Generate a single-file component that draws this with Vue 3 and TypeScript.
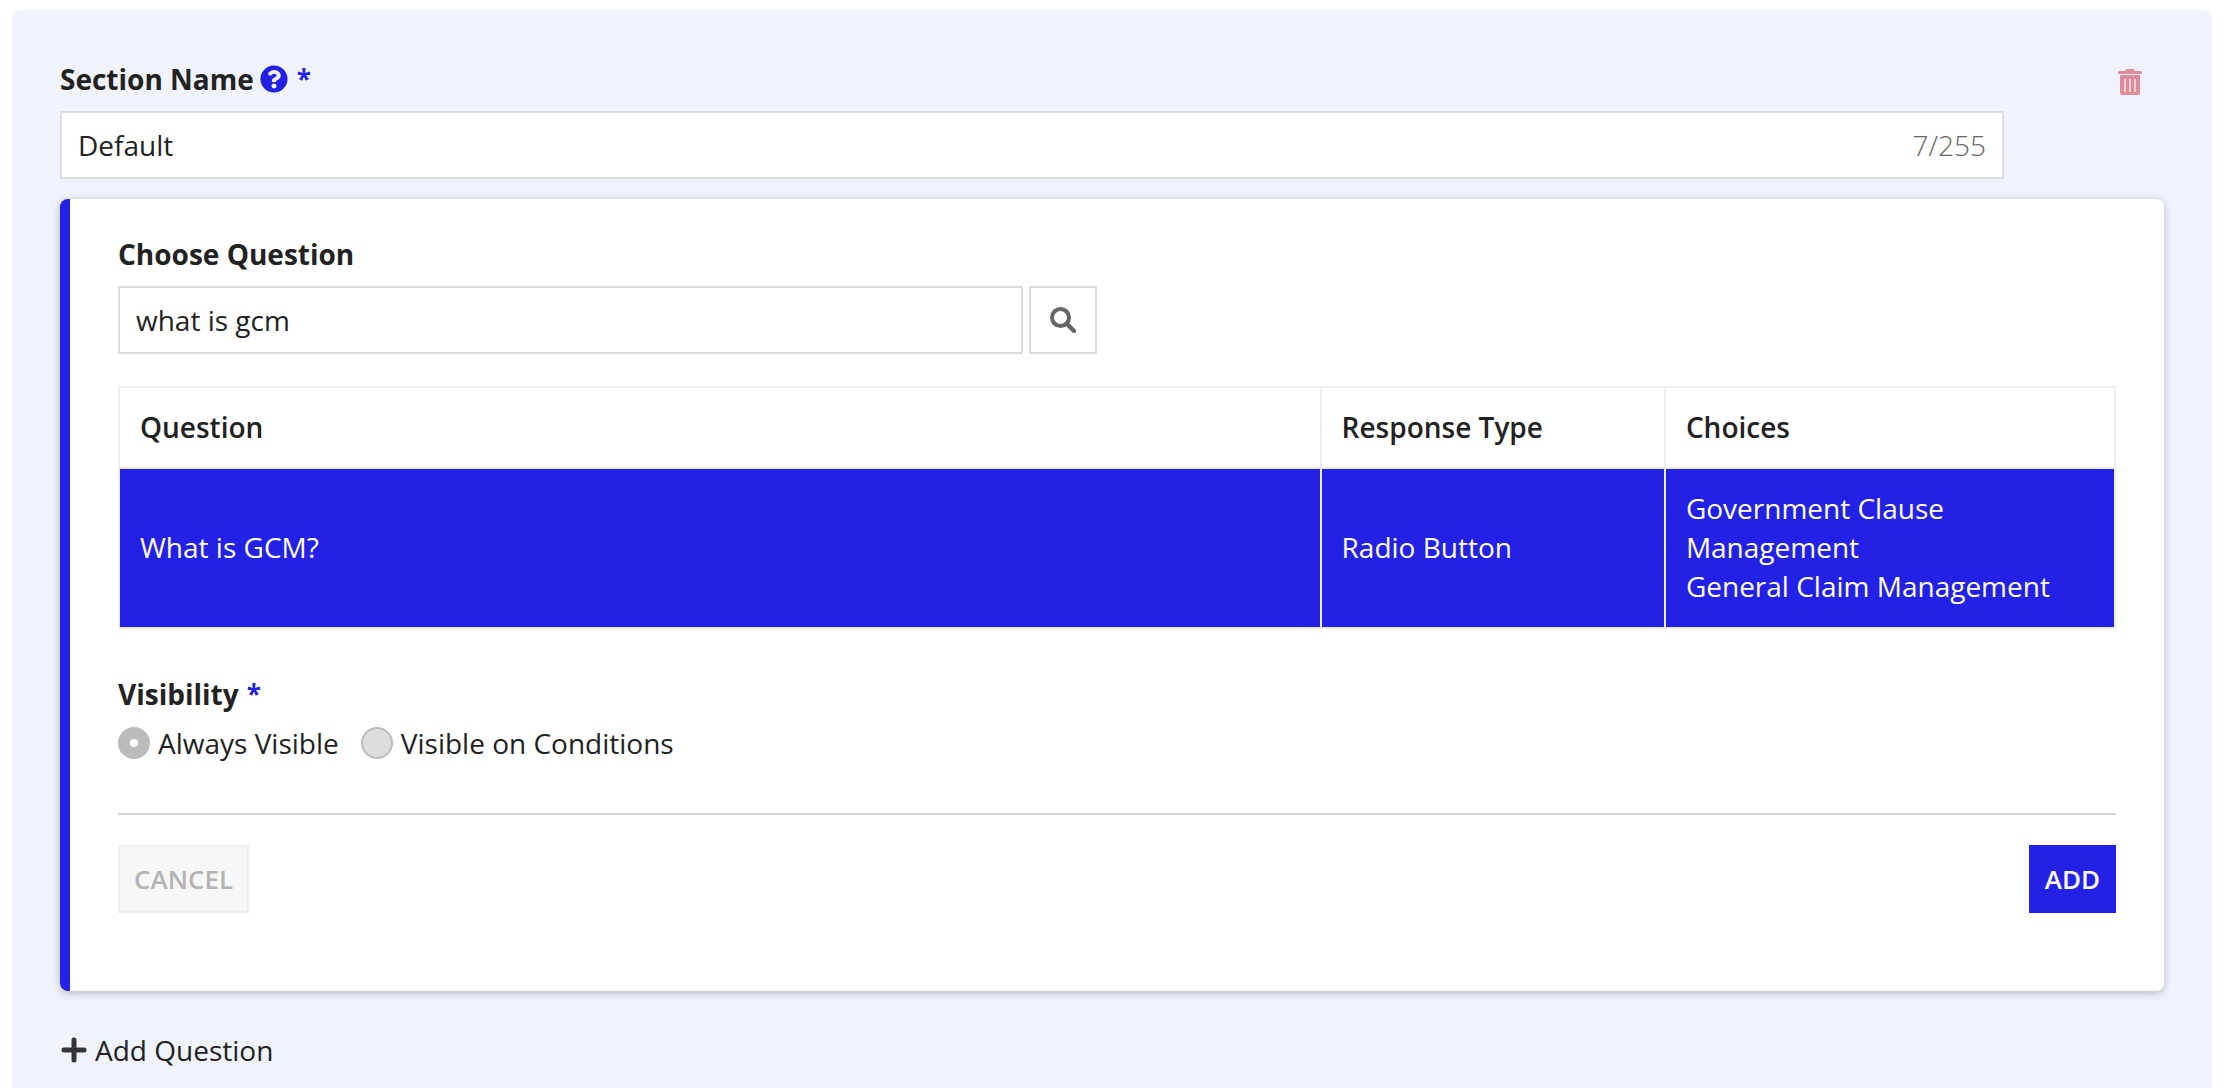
<script setup lang="ts">
import { ref, computed } from 'vue'

interface QuestionRow {
  question: string
  responseType: string
  choices: string[]
}

const maxLength = 255
const sectionName = ref('Default')
const search = ref('what is gcm')
const visibility = ref('always')
const counter = computed(() => `${sectionName.value.length}/${maxLength}`)

const rows: QuestionRow[] = [
  {
    question: 'What is GCM?',
    responseType: 'Radio Button',
    choices: ['Government Clause Management', 'General Claim Management'],
  },
]
</script>

<template>
  <main class="section-panel">
    <div class="section-head">
      <div class="section-field">
        <div class="label-row">
          <label class="label" for="section-name">Section Name</label>
          <svg class="help-icon" viewBox="0 0 512 512" aria-hidden="true">
            <path
              fill="currentColor"
              d="M504 256c0 136.997-111.043 248-248 248S8 392.997 8 256C8 119.083 119.043 8 256 8s248 111.083 248 248zM262.655 90c-54.497 0-89.255 22.957-116.549 63.758-3.536 5.286-2.353 12.415 2.715 16.258l34.699 26.31c5.205 3.947 12.621 3.008 16.665-2.122 17.864-22.658 30.113-35.797 57.303-35.797 20.429 0 45.698 13.148 45.698 32.958 0 14.976-12.363 22.667-32.534 33.976C247.128 238.528 216 254.941 216 296v4c0 6.627 5.373 12 12 12h56c6.627 0 12-5.373 12-12v-1.333c0-28.462 83.186-29.647 83.186-106.667 0-58.002-60.165-102-116.531-102zM256 338c-25.365 0-46 20.635-46 46 0 25.364 20.635 46 46 46s46-20.636 46-46c0-25.365-20.635-46-46-46z"
            />
          </svg>
          <span class="required">*</span>
        </div>
        <div class="text-box">
          <input id="section-name" v-model="sectionName" type="text" :maxlength="maxLength" />
          <span class="counter">{{ counter }}</span>
        </div>
      </div>
      <div class="section-actions">
        <button class="icon-button" type="button" aria-label="Delete section">
          <svg class="trash-icon" viewBox="0 0 24 26" aria-hidden="true">
            <path
              fill="currentColor"
              d="M1 2H7Q8 0 9 0H15Q16 0 17 2H23Q24 2 24 3V4Q24 5 23 5H1Q0 5 0 4V3Q0 2 1 2ZM2 6H22V24Q22 26 20 26H4Q2 26 2 24Z"
            />
            <path fill="none" stroke="#f0d3dd" stroke-width="2" d="M7 10V23M12 10V23M17 10V23" />
          </svg>
        </button>
      </div>
    </div>

    <section class="card">
      <div class="label-row">
        <label class="label" for="question-search">Choose Question</label>
      </div>
      <div class="search-row">
        <div class="text-box">
          <input id="question-search" v-model="search" type="text" />
        </div>
        <button class="search-button" type="button" aria-label="Search">
          <svg class="search-icon" viewBox="0 0 26 26" aria-hidden="true">
            <circle cx="10.5" cy="10.5" r="8.5" fill="none" stroke="currentColor" stroke-width="4" />
            <path d="M17 17L24 24" fill="none" stroke="currentColor" stroke-width="4.4" stroke-linecap="round" />
          </svg>
        </button>
      </div>

      <table class="questions">
        <colgroup>
          <col class="col-question" />
          <col class="col-type" />
          <col />
        </colgroup>
        <thead>
          <tr>
            <th scope="col">Question</th>
            <th scope="col">Response Type</th>
            <th scope="col">Choices</th>
          </tr>
        </thead>
        <tbody>
          <tr v-for="row in rows" :key="row.question">
            <td>{{ row.question }}</td>
            <td>{{ row.responseType }}</td>
            <td>
              <div v-for="choice in row.choices" :key="choice">{{ choice }}</div>
            </td>
          </tr>
        </tbody>
      </table>

      <fieldset class="visibility">
        <legend class="label-row">
          <span class="label">Visibility</span>
          <span class="required">*</span>
        </legend>
        <div class="radio-row">
          <label class="radio">
            <input v-model="visibility" type="radio" name="visibility" value="always" disabled />
            Always Visible
          </label>
          <label class="radio">
            <input v-model="visibility" type="radio" name="visibility" value="conditions" disabled />
            Visible on Conditions
          </label>
        </div>
      </fieldset>

      <footer class="card-actions">
        <button class="button cancel" type="button" disabled>CANCEL</button>
        <button class="button add" type="button">ADD</button>
      </footer>
    </section>

    <button class="add-question" type="button">
      <svg class="plus-icon" viewBox="0 0 26 26" aria-hidden="true">
        <path d="M13 3V23M3 13H23" fill="none" stroke="currentColor" stroke-width="5" stroke-linecap="round" />
      </svg>
      Add Question
    </button>
  </main>
</template>

<style>
body {
  margin: 0;
  background: #fff;
}
</style>

<style scoped>
.section-panel,
.section-panel * {
  box-sizing: border-box;
}

.section-panel {
  margin: 10px 14px 0 12px;
  padding: 49px 48px 16px;
  min-height: calc(100vh - 10px);
  border-radius: 8px 8px 0 0;
  background: #f0f3fc;
  color: #222;
  font-family: 'Open Sans', 'Noto Sans', sans-serif;
  font-size: 28px;
  line-height: 40px;
}

button,
input {
  font: inherit;
  color: inherit;
}

button {
  border: 0;
  padding: 0;
  background: none;
}

.section-head {
  display: flex;
}

.section-field {
  flex: 1;
}

.section-actions {
  display: flex;
  justify-content: flex-end;
  align-items: flex-start;
  width: 160px;
  padding: 10px 22px 0 0;
}

.icon-button {
  display: flex;
  color: #e08c99;
}

.trash-icon {
  width: 24px;
  height: 26px;
}

.label-row {
  display: flex;
  align-items: center;
  margin-bottom: 12px;
  padding: 0;
}

.label {
  font-weight: 700;
}

.help-icon {
  width: 28px;
  height: 28px;
  margin: 0 1px 0 6px;
  color: #2321e6;
}

.required {
  margin-left: 8px;
  color: #2321e6;
  font-weight: 700;
  font-size: 26px;
}

.text-box {
  display: flex;
  flex: 1;
  align-items: center;
  height: 68px;
  padding: 0 16px;
  border: 2px solid #dcdcdc;
  background: #fff;
}

.text-box input {
  flex: 1;
  min-width: 0;
  padding: 0;
  border: 0;
  outline: 0;
  background: transparent;
}

.counter {
  color: #666;
  font-weight: 300;
}

.card {
  margin-top: 20px;
  padding: 35px 48px 78px;
  border-left: 10px solid #2321e6;
  border-radius: 8px;
  background: #fff;
  box-shadow: 0 2px 8px rgba(0, 0, 0, 0.24);
}

.search-row {
  display: flex;
  gap: 6px;
  width: calc(50% - 20px);
}

.search-button {
  display: flex;
  align-items: center;
  justify-content: center;
  width: 68px;
  height: 68px;
  border: 2px solid #dcdcdc;
  background: #fff;
  color: #666;
}

.search-icon,
.plus-icon {
  width: 26px;
  height: 26px;
}

.questions {
  width: 100%;
  margin-top: 32px;
  border-collapse: collapse;
  table-layout: fixed;
  line-height: 39px;
}

.col-question {
  width: 60.2%;
}

.col-type {
  width: 17.25%;
}

.questions th,
.questions td {
  border: 2px solid #eee;
  text-align: left;
}

.questions th {
  padding: 20px;
  font-weight: 600;
}

.questions td {
  padding: 20px 20px 21px;
  background: #2321e6;
  color: #fff;
}

.visibility {
  margin: 45px 0 0;
  padding: 0;
  border: 0;
}

.visibility .label-row {
  margin-bottom: 9px;
}

.radio-row {
  display: flex;
  gap: 22px;
}

.radio {
  display: flex;
  align-items: center;
  gap: 8px;
}

.radio input {
  width: 32px;
  height: 32px;
  margin: 0;
  border: 2px solid #bbb;
  border-radius: 50%;
  background: #ddd;
  appearance: none;
}

.radio input:checked {
  border-width: 12px;
  border-color: #bbb;
  background: #fff;
}

.card-actions {
  display: flex;
  justify-content: space-between;
  margin-top: 50px;
  padding-top: 30px;
  border-top: 2px solid #d3d3d3;
}

.button {
  height: 68px;
  padding: 0 14px;
  border: 2px solid #2321e6;
  font-size: 26px;
  font-weight: 600;
}

.cancel {
  border-color: #eee;
  background: #f7f7f7;
  color: #b3b3b3;
}

.add {
  background: #2321e6;
  color: #fff;
}

.add-question {
  display: flex;
  align-items: center;
  gap: 8px;
  margin-top: 39px;
  padding-left: 1px;
}

.plus-icon {
  color: #333338;
}
</style>
